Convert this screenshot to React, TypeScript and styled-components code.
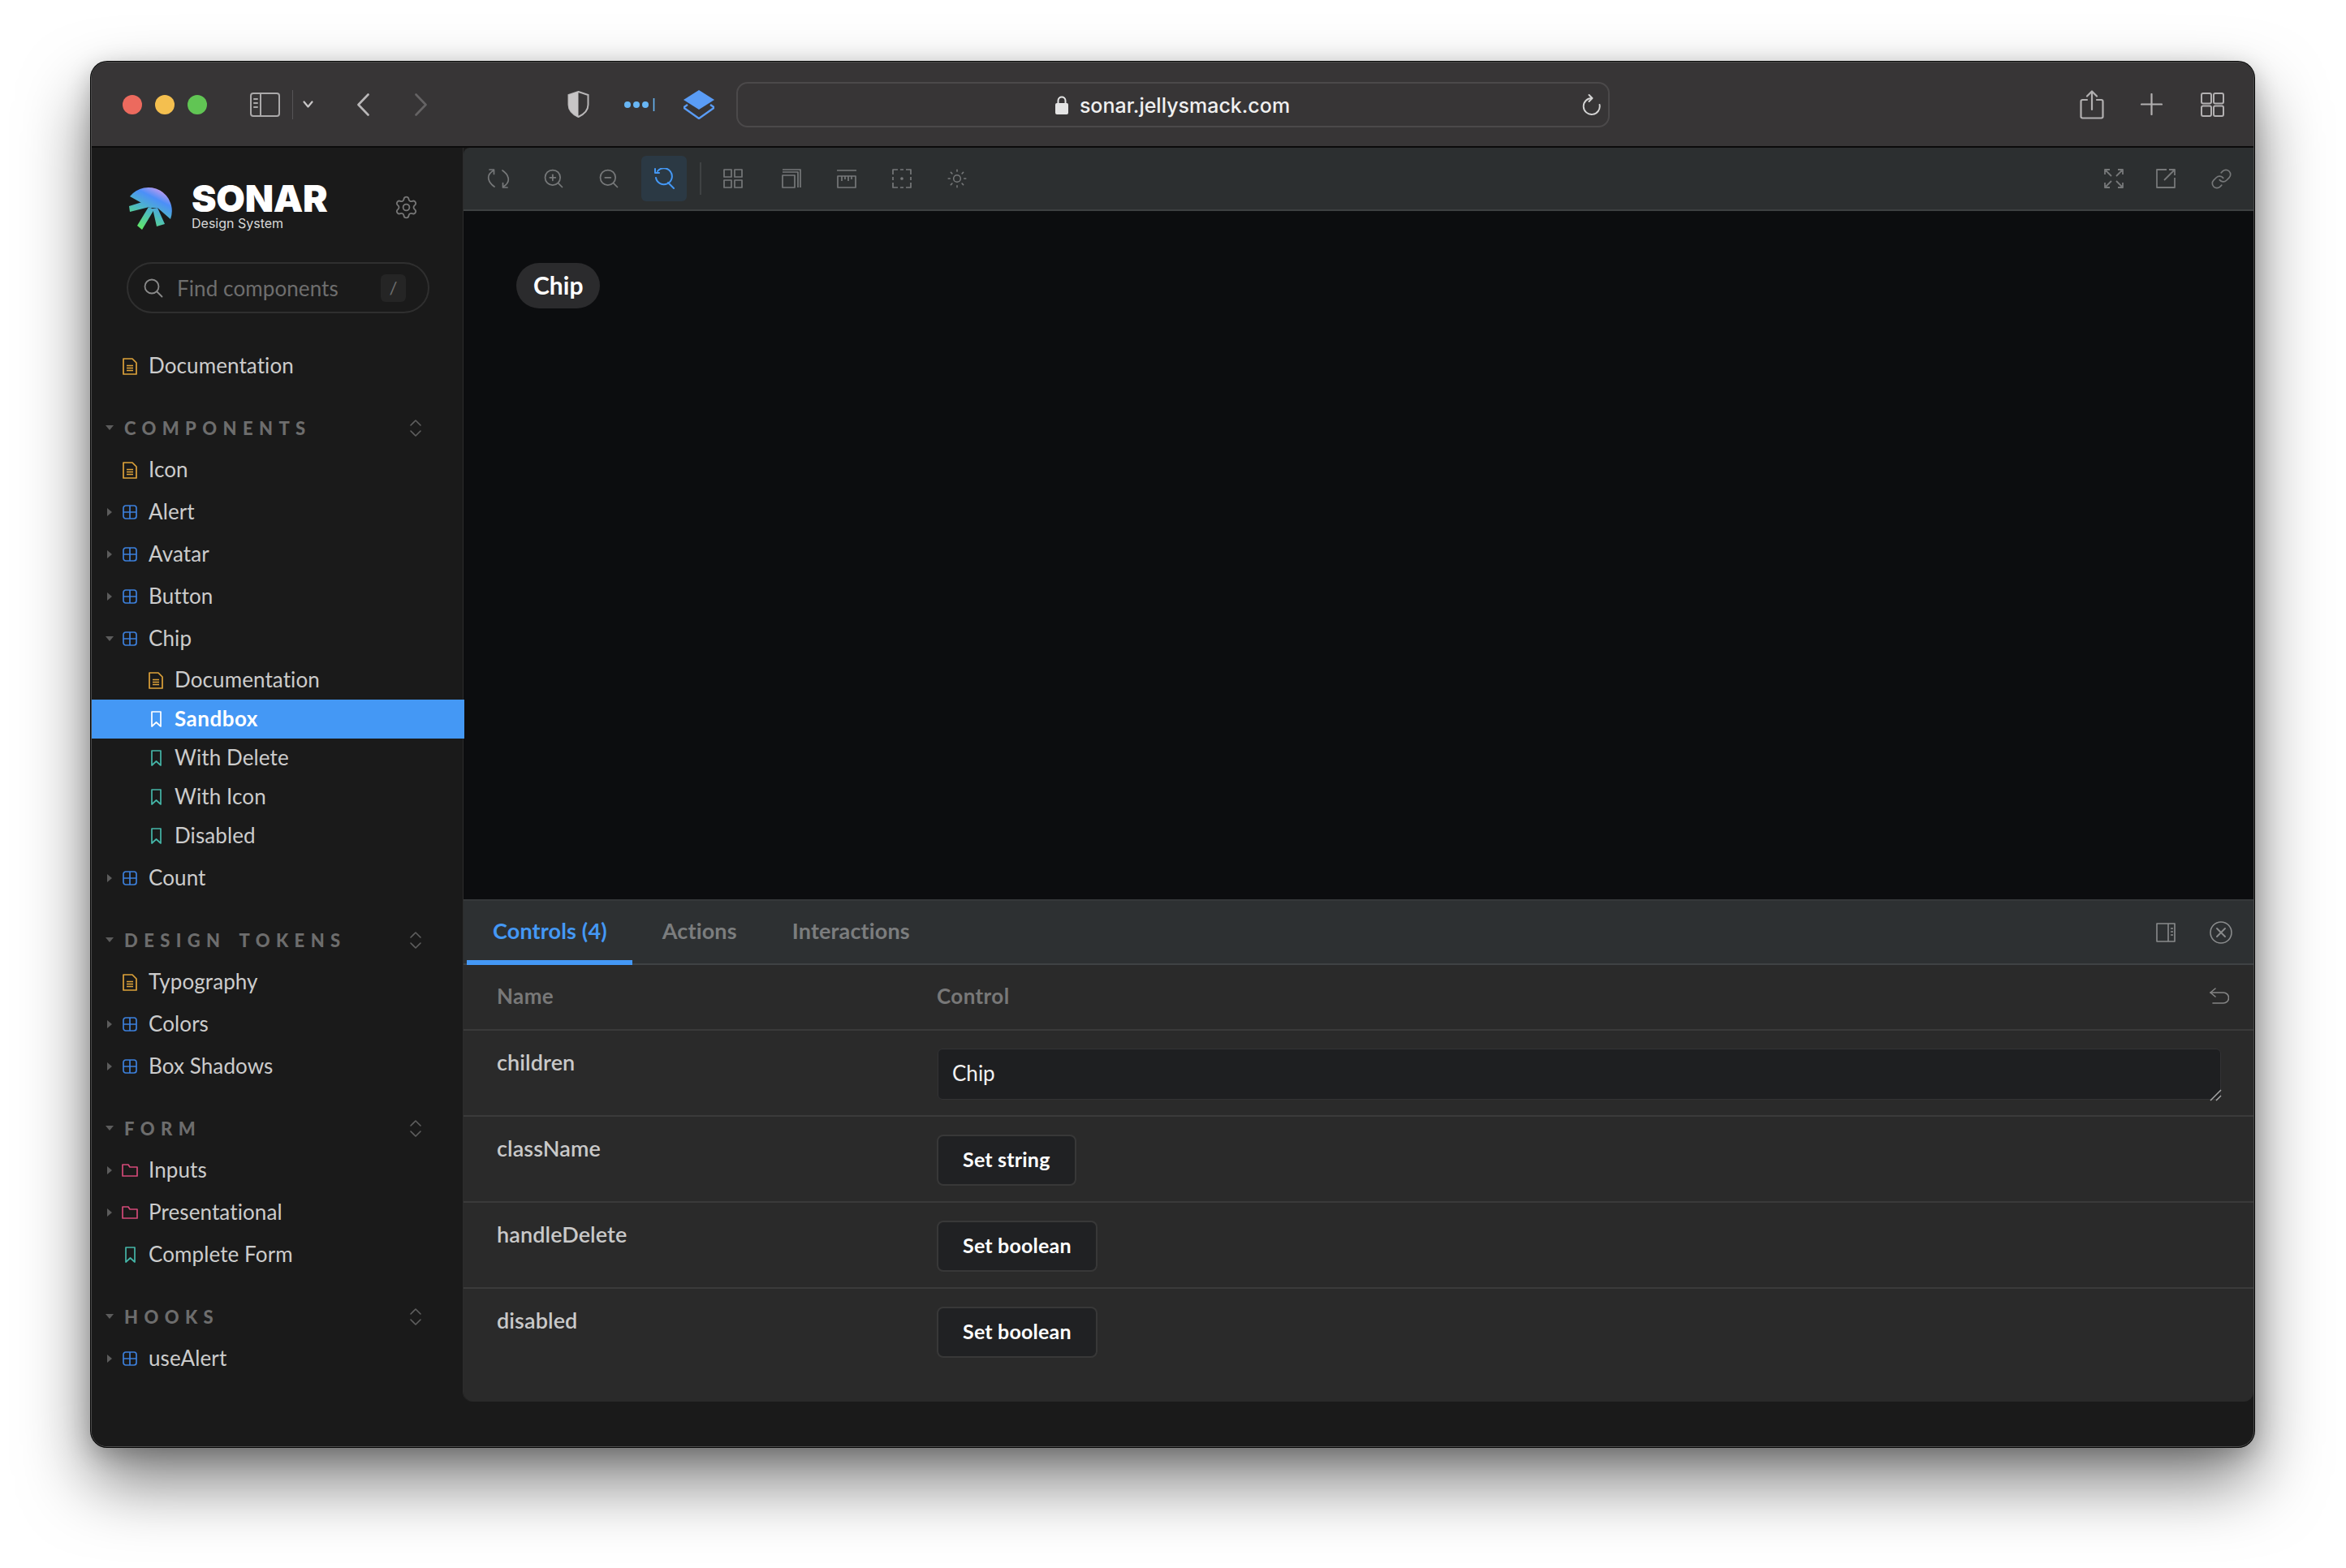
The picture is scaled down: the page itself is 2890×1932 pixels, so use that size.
import React from 'react';
import styled, { createGlobalStyle } from 'styled-components';
import { Settings, Sun, ZoomIn, ZoomOut, Link as LinkIcon } from 'lucide-react';

const GlobalStyle = createGlobalStyle`
  html, body {
    margin: 0;
    padding: 0;
    background: #ffffff;
  }
  * {
    box-sizing: border-box;
  }
`;

const uiFont = `Lato, "Open Sans", sans-serif`;

const Page = styled.div`
  width: 2890px;
  height: 1932px;
  padding: 76px 0 0 112px;
  background: #ffffff;
  overflow: hidden;
`;

const Window = styled.div`
  width: 2665px;
  height: 1707px;
  display: flex;
  flex-direction: column;
  border: 1px solid #4b4b4b;
  border-radius: 20px;
  background: #1a1a1a;
  box-shadow: 0 0 0 1px #050505, 0 42px 84px rgba(0, 0, 0, 0.52), 0 8px 30px rgba(0, 0, 0, 0.22);
  overflow: hidden;
`;

/* ---- safari title bar ---- */

const TitleBar = styled.div`
  flex: none;
  height: 105px;
  display: flex;
  align-items: center;
  padding: 0 0 0 38px;
  background: #373536;
  border-bottom: 2px solid #0b0b0b;
`;

const Lights = styled.div`
  display: flex;
  gap: 16px;
`;

const Light = styled.span<{ $color: string }>`
  width: 24px;
  height: 24px;
  border-radius: 50%;
  background: ${(p) => p.$color};
`;

const BarItem = styled.div<{ $left: number }>`
  flex: none;
  display: flex;
  align-items: center;
  margin-left: ${(p) => p.$left}px;
`;

const BarDivider = styled.div`
  width: 1px;
  height: 36px;
  margin-left: 15px;
  background: #565456;
`;

const UrlBar = styled.div`
  flex: none;
  width: 1076px;
  height: 56px;
  margin-left: 27px;
  display: grid;
  grid-template-columns: 1fr auto 1fr;
  align-items: center;
  padding-right: 9px;
  border: 2px solid #4b494a;
  border-radius: 14px;
`;

const UrlText = styled.div`
  grid-column: 2;
  display: flex;
  align-items: center;
  gap: 14px;
  margin-left: 8px;
  padding-top: 2px;
  font: 500 25px Inter, sans-serif;
  color: #f0f0f0;
`;

const UrlReload = styled.div`
  grid-column: 3;
  justify-self: end;
  display: flex;
`;

/* ---- sidebar ---- */

const Body = styled.div`
  flex: 1;
  min-height: 0;
  display: flex;
`;

const Sidebar = styled.aside`
  flex: none;
  width: 457px;
  background: #1a1a1a;
  font-family: ${uiFont};
`;

const Brand = styled.div`
  height: 56px;
  margin: 45px 0 40px 46px;
  display: flex;
  align-items: center;
`;

const BrandText = styled.div`
  margin-left: 21px;
  display: flex;
  flex-direction: column;
  font-family: Inter, sans-serif;
`;

const BrandName = styled.span`
  font-size: 46px;
  line-height: 38px;
  font-weight: 900;
  letter-spacing: -0.3px;
  color: #ffffff;
`;

const BrandSub = styled.span`
  margin-top: 3px;
  font-size: 16px;
  line-height: 19px;
  color: #d8d8d8;
`;

const GearSlot = styled.div`
  margin-left: 81px;
  display: flex;
  color: #767676;
`;

const SearchBox = styled.div`
  width: 373px;
  height: 63px;
  margin: 0 0 39px 43px;
  display: flex;
  align-items: center;
  padding-left: 19px;
  border: 2px solid #2f2f2f;
  border-radius: 32px;
`;

const SearchText = styled.span`
  margin-left: 17px;
  font-size: 26px;
  color: #6e6e6e;
  letter-spacing: 0.1px;
`;

const KeyHint = styled.span`
  width: 31px;
  height: 34px;
  margin-left: auto;
  margin-right: 27px;
  display: flex;
  align-items: center;
  justify-content: center;
  border-radius: 6px;
  background: #252525;
  color: #6e6e6e;
  font-size: 22px;
`;

const Section = styled.div`
  margin-bottom: 24px;
`;

const SectionHead = styled.div`
  height: 52px;
  display: flex;
  align-items: center;
  padding: 0 51px 0 17px;
`;

const SectionTitle = styled.span`
  margin-left: 13px;
  margin-right: auto;
  font-size: 22px;
  font-weight: 900;
  letter-spacing: 7.4px;
  word-spacing: 4px;
  color: #6d6d6d;
  white-space: pre;
`;

const Row = styled.div<{ $sub?: boolean; $active?: boolean; $before?: number; $after?: number }>`
  height: ${(p) => (p.$sub ? 48 : 52)}px;
  margin-top: ${(p) => p.$before || 0}px;
  margin-bottom: ${(p) => p.$after || 0}px;
  margin-left: ${(p) => (p.$active ? -1 : 0)}px;
  margin-right: ${(p) => (p.$active ? -2 : 0)}px;
  display: flex;
  align-items: center;
  padding-left: ${(p) => (p.$sub ? 69 + (p.$active ? 1 : 0) : 37)}px;
  padding-bottom: 2px;
  position: relative;
  z-index: ${(p) => (p.$active ? 1 : 0)};
  font-size: 26px;
  font-weight: ${(p) => (p.$active ? 700 : 400)};
  color: ${(p) => (p.$active ? '#ffffff' : '#cccccc')};
  letter-spacing: ${(p) => (p.$active ? 0.5 : 0.1)}px;
  background: ${(p) => (p.$active ? '#4498f5' : 'transparent')};
`;

const CaretSlot = styled.span`
  position: absolute;
  left: 17px;
  top: 50%;
  width: 10px;
  height: 10px;
  margin-top: -5px;
  display: flex;
  align-items: center;
  justify-content: center;
`;

const RowIcon = styled.span`
  width: 20px;
  margin-right: 13px;
  padding-top: 2px;
  display: flex;
  justify-content: center;
`;

/* ---- main ---- */

const Main = styled.main`
  flex: 1;
  min-width: 0;
  display: flex;
  padding-bottom: 55px;
`;

const Stage = styled.div`
  flex: 1;
  min-width: 0;
  display: flex;
  flex-direction: column;
  border-left: 1px solid #2c2c2c;
  border-bottom-left-radius: 12px;
`;

const Toolbar = styled.div`
  flex: none;
  height: 78px;
  display: flex;
  align-items: center;
  gap: 12px;
  padding: 0 12px 0 15px;
  background: #2c2f30;
  border-bottom: 2px solid #3d4041;
  border-top-left-radius: 8px;
`;

const ToolButton = styled.div<{ $active?: boolean; $nudge?: number }>`
  flex: none;
  width: 56px;
  height: 56px;
  margin-left: ${(p) => p.$nudge || 0}px;
  display: flex;
  align-items: center;
  justify-content: center;
  border-radius: 6px;
  background: ${(p) => (p.$active ? '#2b3944' : 'transparent')};
  color: ${(p) => (p.$active ? '#4498f5' : '#767879')};
`;

const ToolDivider = styled.div`
  flex: none;
  width: 2px;
  height: 40px;
  margin: 0 -1px 0 4px;
  background: #3f4243;
`;

const ToolRight = styled.div`
  margin-left: auto;
  display: flex;
  gap: 8px;
  & > :last-child {
    margin-left: 4px;
  }
`;

const Canvas = styled.div`
  flex: 1;
  min-height: 0;
  padding: 64px 0 0 65px;
  background: #0c0d0f;
`;

const Chip = styled.div`
  display: inline-flex;
  align-items: center;
  height: 56px;
  padding: 0 21px 2px;
  border-radius: 28px;
  background: #2b2b2d;
  color: #ffffff;
  font: 700 30px ${uiFont};
`;

const Panel = styled.section`
  flex: none;
  height: 619px;
  display: flex;
  flex-direction: column;
  border-bottom-left-radius: 12px;
  border-bottom-right-radius: 12px;
  background: #2a2a2a;
  font-family: ${uiFont};
  overflow: hidden;
`;

const TabBar = styled.div`
  flex: none;
  height: 81px;
  display: flex;
  align-items: stretch;
  gap: 5px;
  padding-left: 4px;
  background: #2d3032;
  border-top: 2px solid #35383a;
  border-bottom: 2px solid #3f4244;
`;

const Tab = styled.div<{ $active?: boolean }>`
  display: flex;
  align-items: center;
  padding: 0 31px 0 32px;
  margin-bottom: -2px;
  font-size: 27px;
  font-weight: 700;
  letter-spacing: 0.15px;
  color: ${(p) => (p.$active ? '#4498f5' : '#7b7d7e')};
  border-bottom: 6px solid ${(p) => (p.$active ? '#4498f5' : 'transparent')};
`;

const TabIcons = styled.div`
  margin-left: auto;
  display: flex;
  align-items: center;
  gap: 42px;
  padding-right: 26px;
  color: #898b8c;
`;

const TableRow = styled.div<{ $head?: boolean; $last?: boolean }>`
  flex: none;
  height: ${(p) => (p.$head ? 81 : 106)}px;
  display: grid;
  grid-template-columns: 583px 1fr;
  align-items: ${(p) => (p.$head ? 'center' : 'start')};
  padding: ${(p) => (p.$head ? '0 30px 3px 0' : '22px 40px 0 0')};
  border-bottom: ${(p) => (p.$last ? 'none' : '2px solid #3a3a3a')};
`;

const HeadCell = styled.div<{ $first?: boolean }>`
  padding-left: ${(p) => (p.$first ? 41 : 0)}px;
  font-size: 26px;
  font-weight: 700;
  letter-spacing: 0.4px;
  color: #787878;
  display: flex;
  align-items: center;
  justify-content: space-between;
`;

const PropName = styled.div`
  margin-top: -3px;
  padding-left: 41px;
  font-size: 27px;
  line-height: 40px;
  font-weight: 600;
  letter-spacing: 0.1px;
  color: #c9c9c9;
`;

const TextBox = styled.div`
  position: relative;
  display: flex;
`;

const TextField = styled.textarea`
  width: 100%;
  height: 63px;
  margin-left: 1px;
  padding: 13px 17px;
  border: 1px solid #333335;
  border-radius: 6px;
  background: #1e1f21;
  color: #f2f2f2;
  font: 400 26px ${uiFont};
  resize: none;
  outline: none;
`;

const GripIcon = styled.svg`
  position: absolute;
  right: -1px;
  bottom: -2px;
`;

const SetButton = styled.div`
  display: inline-flex;
  align-items: center;
  height: 63px;
  padding: 0 30px 3px;
  border: 2px solid #383838;
  border-radius: 8px;
  background: #202123;
  color: #ffffff;
  font-size: 25px;
  font-weight: 700;
  letter-spacing: 0.2px;
`;

/* ---- drawn icons ---- */

const stroke = {
  fill: 'none',
  stroke: 'currentColor',
  strokeLinecap: 'round',
  strokeLinejoin: 'round',
} as const;

const Logo = () => (
  <svg width="56" height="56" viewBox="0 0 56 56">
    <defs>
      <linearGradient id="sonarGrad" gradientUnits="userSpaceOnUse" x1="42" y1="2" x2="14" y2="56">
        <stop offset="0" stopColor="#ee9fec" />
        <stop offset="0.3" stopColor="#4c8ff8" />
        <stop offset="0.6" stopColor="#4db9c4" />
        <stop offset="1" stopColor="#62ea62" />
      </linearGradient>
    </defs>
    <g fill="url(#sonarGrad)">
      <path d="M1 15 A29 29 0 0 1 51 43 L35 29 L26 29 Z" />
      <path d="M0 27 L16 22 L25 28 L1 34 Z" />
      <path d="M10 51 L16 56 L31 31 L24 28 Z" />
      <path d="M34 52 L44 49 L35 29 L29 30 Z" />
    </g>
  </svg>
);

const SidebarToggle = () => (
  <svg width="37" height="30" viewBox="0 0 37 30" style={{ color: '#aaa8a9' }} {...stroke} strokeWidth="2">
    <rect x="1" y="1" width="35" height="28" rx="3" />
    <path d="M13 1 V29" />
    <path d="M5 8 H9 M5 13 H9 M5 18 H9" />
  </svg>
);

const SmallChevron = () => (
  <svg width="13" height="9" viewBox="0 0 13 9" style={{ color: '#c8c6c7' }} {...stroke} strokeWidth="2.2">
    <path d="M1.5 1.5 L6.5 7.5 L11.5 1.5" />
  </svg>
);

const NavChevron = ({ back, color }: { back?: boolean; color: string }) => (
  <svg width="15" height="28" viewBox="0 0 15 28" style={{ color }} {...stroke} strokeWidth="2.6">
    <path d={back ? 'M13.5 1.5 L1.5 14 L13.5 26.5' : 'M1.5 1.5 L13.5 14 L1.5 26.5'} />
  </svg>
);

const Shield = () => (
  <svg width="27" height="33" viewBox="0 0 27 33">
    <path d="M13.5 1 L25.5 5 V17 C25.5 24 20 29 13.5 32 C7 29 1.5 24 1.5 17 V5 Z" fill="none" stroke="#b8b6b7" strokeWidth="2" />
    <path d="M13.5 1 L1.5 5 V17 C1.5 24 7 29 13.5 32 Z" fill="#c7c5c6" />
  </svg>
);

const PasswordDots = () => (
  <svg width="38" height="16" viewBox="0 0 38 16">
    <g fill="#68b6f5">
      <circle cx="4" cy="8" r="4" />
      <circle cx="15" cy="8" r="4" />
      <circle cx="26" cy="8" r="4" />
    </g>
    <path d="M36.5 0 V16" stroke="#68b6f5" strokeWidth="1.6" />
  </svg>
);

const Layers = () => (
  <svg width="38" height="36" viewBox="0 0 38 36">
    <path d="M19 0 L38 12 L19 24 L0 12 Z" fill="#5a9cf5" />
    <path d="M5 18 L0 21.5 L19 35 L38 21.5 L33 18" fill="none" stroke="#5a9cf5" strokeWidth="2.4" />
  </svg>
);

const Lock = () => (
  <svg width="16" height="23" viewBox="0 0 16 23">
    <path d="M3.5 10 V6 C3.5 0 12.5 0 12.5 6 V10" fill="none" stroke="#e4e4e4" strokeWidth="2" />
    <rect x="0" y="9" width="16" height="14" rx="2" fill="#e4e4e4" />
  </svg>
);

const Reload = () => (
  <svg width="24" height="26" viewBox="0 0 24 26" style={{ color: '#d5d5d5' }} {...stroke} strokeWidth="1.9">
    <path d="M13 5 A10 10 0 1 0 22.5 13" />
    <path d="M9.5 1 L13.5 5 L9.5 9" />
  </svg>
);

const Share = () => (
  <svg width="30" height="36" viewBox="0 0 30 36" style={{ color: '#b2b0b1' }} {...stroke} strokeWidth="2.2">
    <path d="M9 12 H3.5 A2 2 0 0 0 1.5 14 V32 A2 2 0 0 0 3.5 34.5 H26.5 A2 2 0 0 0 28.5 32 V14 A2 2 0 0 0 26.5 12 H21" />
    <path d="M15 24 V2 M9 7.5 L15 1.5 L21 7.5" />
  </svg>
);

const Plus = () => (
  <svg width="27" height="27" viewBox="0 0 27 27" style={{ color: '#b2b0b1' }} {...stroke} strokeWidth="2.2">
    <path d="M13.5 1 V26 M1 13.5 H26" />
  </svg>
);

const TabsGrid = () => (
  <svg width="29" height="30" viewBox="0 0 29 30" style={{ color: '#b2b0b1' }} {...stroke} strokeWidth="2">
    <rect x="1" y="1" width="12" height="12.5" rx="2" />
    <rect x="16" y="1" width="12" height="12.5" rx="2" />
    <rect x="1" y="16.5" width="12" height="12.5" rx="2" />
    <rect x="16" y="16.5" width="12" height="12.5" rx="2" />
  </svg>
);

const Gear = () => <Settings size={31} strokeWidth={1.4} />;

const SearchGlass = () => (
  <svg width="24" height="24" viewBox="0 0 24 24" style={{ color: '#8a8a8a' }} {...stroke} strokeWidth="1.8">
    <circle cx="10" cy="10" r="8.5" />
    <path d="M16.5 16.5 L22.5 22.5" />
  </svg>
);

const DocIcon = () => (
  <svg width="18" height="21" viewBox="0 0 18 21" fill="none" stroke="#dda23a" strokeWidth="1.7" strokeLinejoin="round">
    <path d="M1 1 H12 L17 6 V20 H1 Z" />
    <path d="M5 9.5 H13 M5 12.5 H13 M5 15.5 H13" strokeWidth="1.3" />
  </svg>
);

const ComponentIcon = () => (
  <svg width="18" height="18" viewBox="0 0 18 18" fill="none" stroke="#3d80dc" strokeWidth="1.7">
    <rect x="1" y="1" width="16" height="16" rx="3" />
    <path d="M9 1 V17 M1 9 H17" />
  </svg>
);

const BookmarkIcon = ({ color }: { color: string }) => (
  <svg width="13" height="20" viewBox="0 0 13 20" fill="none" stroke={color} strokeWidth="1.7" strokeLinejoin="round">
    <path d="M1 1 H12 V19 L6.5 14 L1 19 Z" />
  </svg>
);

const FolderIcon = () => (
  <svg width="20" height="16" viewBox="0 0 20 16" fill="none" stroke="#d34a78" strokeWidth="1.7" strokeLinejoin="round">
    <path d="M1 1 H8 L10 4 H19 V15 H1 Z" />
  </svg>
);

const Caret = ({ open }: { open: boolean }) =>
  open ? (
    <svg width="10" height="6" viewBox="0 0 10 6">
      <path d="M0 0 H10 L5 6 Z" fill="#5c5c5c" />
    </svg>
  ) : (
    <svg width="6" height="10" viewBox="0 0 6 10">
      <path d="M0 0 V10 L6 5 Z" fill="#5c5c5c" />
    </svg>
  );

const Unfold = () => (
  <svg width="14" height="21" viewBox="0 0 14 21" style={{ color: '#5f5f5f' }} {...stroke} strokeWidth="1.6">
    <path d="M1 7 L7 1 L13 7 M1 14 L7 20 L13 14" />
  </svg>
);

const SyncIcon = () => (
  <svg width="28" height="26" viewBox="0 0 28 26" {...stroke} strokeWidth="1.7">
    <path d="M8 3 C3 6 1 10 2 14 C3 18 6 21 9 23" />
    <path d="M20 23 C25 20 27 16 26 12 C25 8 22 5 19 3" />
    <path d="M3 2 H8.5 V7.5 M25 24 H19.5 V18.5" />
  </svg>
);

const ResetZoomIcon = () => (
  <svg width="28" height="26" viewBox="0 0 28 26" {...stroke} strokeWidth="2">
    <path d="M6 4 A10 10 0 1 1 4 12" />
    <path d="M3 1 V6 H8" />
    <path d="M19 18 L26 25" />
  </svg>
);

const GridIcon = () => (
  <svg width="24" height="24" viewBox="0 0 24 24" {...stroke} strokeWidth="1.7" strokeLinecap="butt">
    <rect x="1" y="1" width="9" height="9" />
    <rect x="14" y="1" width="9" height="9" />
    <rect x="1" y="14" width="9" height="9" />
    <rect x="14" y="14" width="9" height="9" />
  </svg>
);

const StackIcon = () => (
  <svg width="24" height="24" viewBox="0 0 24 24" {...stroke} strokeWidth="1.7" strokeLinecap="butt">
    <rect x="1" y="8" width="15" height="15" />
    <path d="M1 4 H20 V23 M1 1 H23 V23" />
  </svg>
);

const RulerIcon = () => (
  <svg width="24" height="24" viewBox="0 0 24 24" {...stroke} strokeWidth="1.7" strokeLinecap="butt">
    <path d="M0 2 H24" />
    <rect x="1" y="9" width="22" height="14" />
    <path d="M6 9 V15 M10 9 V13 M14 9 V15 M18 9 V13" />
  </svg>
);

const MeasureIcon = () => (
  <svg width="24" height="24" viewBox="0 0 24 24" {...stroke} strokeWidth="1.7" strokeLinecap="butt">
    <path d="M1 7 V1 H7 M17 1 H23 V7 M1 17 V23 H7 M17 23 H23 V17 M1 10 V14 M23 10 V14 M10 1 H14 M10 23 H14" />
    <circle cx="12" cy="12" r="1" fill="currentColor" />
  </svg>
);

const ExpandIcon = () => (
  <svg width="24" height="24" viewBox="0 0 24 24" {...stroke} strokeWidth="1.8" strokeLinecap="butt">
    <path d="M1 7 V1 H7 M1 1 L9 9 M23 7 V1 H17 M23 1 L15 9 M1 17 V23 H7 M1 23 L9 15 M23 17 V23 H17 M23 23 L15 15" />
  </svg>
);

const OpenIcon = () => (
  <svg width="24" height="24" viewBox="0 0 24 24" {...stroke} strokeWidth="1.8" strokeLinecap="butt">
    <path d="M13 1 H1 V23 H23 V11" />
    <path d="M10 14 L23 1 M16 1 H23 V8" />
  </svg>
);

const PanelSideIcon = () => (
  <svg width="24" height="24" viewBox="0 0 24 24" {...stroke} strokeWidth="1.6" strokeLinecap="butt">
    <rect x="1" y="1" width="22" height="22" />
    <path d="M15 1 V23" />
    <path d="M18 7 H21 M18 11 H21 M18 15 H21" />
  </svg>
);

const CloseCircleIcon = () => (
  <svg width="28" height="28" viewBox="0 0 28 28" {...stroke} strokeWidth="1.6">
    <circle cx="14" cy="14" r="13" />
    <path d="M9 9 L19 19 M19 9 L9 19" strokeWidth="1.9" />
  </svg>
);

const UndoIcon = () => (
  <svg width="24" height="20" viewBox="0 0 24 20" style={{ color: '#858585' }} {...stroke} strokeWidth="1.6">
    <path d="M7 1 L1 6 L7 11" />
    <path d="M1 6 H17 A6.5 6.5 0 0 1 17 19 H4" />
  </svg>
);

/* ---- data ---- */

type Kind = 'doc' | 'comp' | 'mark' | 'folder';

interface NavItem {
  label: string;
  kind: Kind;
  caret?: 'open' | 'closed';
  sub?: boolean;
  active?: boolean;
  before?: number;
  after?: number;
}

const sections: { title: string; items: NavItem[] }[] = [
  {
    title: 'COMPONENTS',
    items: [
      { label: 'Icon', kind: 'doc' },
      { label: 'Alert', kind: 'comp', caret: 'closed' },
      { label: 'Avatar', kind: 'comp', caret: 'closed' },
      { label: 'Button', kind: 'comp', caret: 'closed' },
      { label: 'Chip', kind: 'comp', caret: 'open' },
      { label: 'Documentation', kind: 'doc', sub: true, before: 1 },
      { label: 'Sandbox', kind: 'mark', sub: true, active: true },
      { label: 'With Delete', kind: 'mark', sub: true },
      { label: 'With Icon', kind: 'mark', sub: true },
      { label: 'Disabled', kind: 'mark', sub: true, after: 2 },
      { label: 'Count', kind: 'comp', caret: 'closed' },
    ],
  },
  {
    title: 'DESIGN TOKENS',
    items: [
      { label: 'Typography', kind: 'doc' },
      { label: 'Colors', kind: 'comp', caret: 'closed' },
      { label: 'Box Shadows', kind: 'comp', caret: 'closed' },
    ],
  },
  {
    title: 'FORM',
    items: [
      { label: 'Inputs', kind: 'folder', caret: 'closed' },
      { label: 'Presentational', kind: 'folder', caret: 'closed' },
      { label: 'Complete Form', kind: 'mark' },
    ],
  },
  {
    title: 'HOOKS',
    items: [{ label: 'useAlert', kind: 'comp', caret: 'closed' }],
  },
];

const controls = [
  { name: 'className', action: 'Set string' },
  { name: 'handleDelete', action: 'Set boolean' },
  { name: 'disabled', action: 'Set boolean' },
];

function NavRow({ item }: { item: NavItem }) {
  return (
    <Row $sub={item.sub} $active={item.active} $before={item.before} $after={item.after}>
      {item.caret && (
        <CaretSlot>
          <Caret open={item.caret === 'open'} />
        </CaretSlot>
      )}
      <RowIcon>
        {item.kind === 'doc' && <DocIcon />}
        {item.kind === 'comp' && <ComponentIcon />}
        {item.kind === 'folder' && <FolderIcon />}
        {item.kind === 'mark' && <BookmarkIcon color={item.active ? '#ffffff' : '#45b6a8'} />}
      </RowIcon>
      {item.label}
    </Row>
  );
}

export default function App() {
  return (
    <>
      <GlobalStyle />
      <Page>
        <Window>
          <TitleBar>
            <Lights>
              <Light $color="#ec6a5e" />
              <Light $color="#f4bf4f" />
              <Light $color="#61c554" />
            </Lights>
            <BarItem $left={53}>
              <SidebarToggle />
            </BarItem>
            <BarDivider />
            <BarItem $left={12}>
              <SmallChevron />
            </BarItem>
            <BarItem $left={54}>
              <NavChevron back color="#b9b7b8" />
            </BarItem>
            <BarItem $left={56}>
              <NavChevron color="#656364" />
            </BarItem>
            <BarItem $left={173}>
              <Shield />
            </BarItem>
            <BarItem $left={43}>
              <PasswordDots />
            </BarItem>
            <BarItem $left={35}>
              <Layers />
            </BarItem>
            <UrlBar>
              <UrlText>
                <Lock />
                sonar.jellysmack.com
              </UrlText>
              <UrlReload>
                <Reload />
              </UrlReload>
            </UrlBar>
            <BarItem $left={579}>
              <Share />
            </BarItem>
            <BarItem $left={45}>
              <Plus />
            </BarItem>
            <BarItem $left={47}>
              <TabsGrid />
            </BarItem>
          </TitleBar>

          <Body>
            <Sidebar>
              <Brand>
                <Logo />
                <BrandText>
                  <BrandName>SONAR</BrandName>
                  <BrandSub>Design System</BrandSub>
                </BrandText>
                <GearSlot>
                  <Gear />
                </GearSlot>
              </Brand>

              <SearchBox>
                <SearchGlass />
                <SearchText>Find components</SearchText>
                <KeyHint>/</KeyHint>
              </SearchBox>

              <Section>
                <NavRow item={{ label: 'Documentation', kind: 'doc' }} />
              </Section>

              {sections.map((section) => (
                <Section key={section.title}>
                  <SectionHead>
                    <Caret open />
                    <SectionTitle>{section.title}</SectionTitle>
                    <Unfold />
                  </SectionHead>
                  {section.items.map((item) => (
                    <NavRow key={item.label} item={item} />
                  ))}
                </Section>
              ))}
            </Sidebar>

            <Main>
              <Stage>
                <Toolbar>
                  <ToolButton>
                    <SyncIcon />
                  </ToolButton>
                  <ToolButton>
                    <ZoomIn size={28} strokeWidth={1.5} />
                  </ToolButton>
                  <ToolButton>
                    <ZoomOut size={28} strokeWidth={1.5} />
                  </ToolButton>
                  <ToolButton $active>
                    <ResetZoomIcon />
                  </ToolButton>
                  <ToolDivider />
                  <ToolButton>
                    <GridIcon />
                  </ToolButton>
                  <ToolButton $nudge={4}>
                    <StackIcon />
                  </ToolButton>
                  <ToolButton>
                    <RulerIcon />
                  </ToolButton>
                  <ToolButton>
                    <MeasureIcon />
                  </ToolButton>
                  <ToolButton>
                    <Sun size={26} strokeWidth={1.4} />
                  </ToolButton>
                  <ToolRight>
                    <ToolButton>
                      <ExpandIcon />
                    </ToolButton>
                    <ToolButton>
                      <OpenIcon />
                    </ToolButton>
                    <ToolButton>
                      <LinkIcon size={27} strokeWidth={1.5} />
                    </ToolButton>
                  </ToolRight>
                </Toolbar>

                <Canvas>
                  <Chip>Chip</Chip>
                </Canvas>

                <Panel>
                  <TabBar>
                    <Tab $active>Controls (4)</Tab>
                    <Tab>Actions</Tab>
                    <Tab>Interactions</Tab>
                    <TabIcons>
                      <PanelSideIcon />
                      <CloseCircleIcon />
                    </TabIcons>
                  </TabBar>

                  <TableRow $head>
                    <HeadCell $first>Name</HeadCell>
                    <HeadCell>
                      Control
                      <UndoIcon />
                    </HeadCell>
                  </TableRow>

                  <TableRow>
                    <PropName>children</PropName>
                    <TextBox>
                      <TextField defaultValue="Chip" />
                      <GripIcon width="15" height="15" viewBox="0 0 15 15" fill="none" stroke="#a5a5a5" strokeWidth="1.5">
                        <path d="M1 14 L14 1 M8 14 L14 8" />
                      </GripIcon>
                    </TextBox>
                  </TableRow>

                  {controls.map((control, index) => (
                    <TableRow key={control.name} $last={index === controls.length - 1}>
                      <PropName>{control.name}</PropName>
                      <div>
                        <SetButton>{control.action}</SetButton>
                      </div>
                    </TableRow>
                  ))}
                </Panel>
              </Stage>
            </Main>
          </Body>
        </Window>
      </Page>
    </>
  );
}
